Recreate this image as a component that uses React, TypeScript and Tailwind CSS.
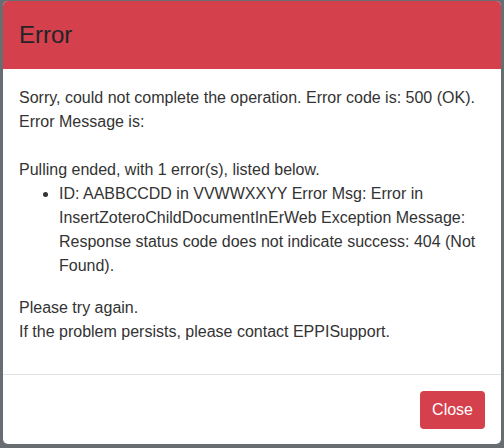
import React from "react";

const ErrorModal = () => {
  return (
    <div className="ml-[3px] mt-[1px] flex w-[498px] flex-col overflow-hidden rounded-[5px] bg-white">
      <div className="h-[68px] bg-[#d4404b] px-4 py-4">
        <h5 className="text-[24px] leading-[36px] text-[#212529]">Error</h5>
      </div>
      <div className="border-b border-[#dee2e6] px-4 pt-[17px] pb-4 text-[16px] leading-6 text-[#333333]">
        <div>
          Sorry, could not complete the operation. Error code is: 500 (OK).
          <br />
          Error Message is:
          <br />
          <br />
          Pulling ended, with 1 error(s), listed below.
          <ul className="mb-[18px] list-disc pl-10">
            <li>
              ID: AABBCCDD in VVWWXXYY Error Msg: Error in
              InsertZoteroChildDocumentInErWeb Exception Message: Response
              status code does not indicate success: 404 (Not Found).
            </li>
          </ul>
          Please try again.
          <br />
          If the problem persists, please contact EPPISupport.
        </div>
        <div className="h-[14px]" />
      </div>
      <div className="flex justify-end px-4 pt-4 pb-[15px]">
        <button className="h-[38px] rounded-[4px] bg-[#d4404b] px-3 text-[16px] leading-6 text-white">
          Close
        </button>
      </div>
    </div>
  );
};

export default function App() {
  return (
    <div
      className="h-[448px] w-[504px] overflow-hidden bg-[#686d72]"
      style={{ fontFamily: '"Liberation Sans", Arial, sans-serif' }}
    >
      <ErrorModal />
    </div>
  );
}
